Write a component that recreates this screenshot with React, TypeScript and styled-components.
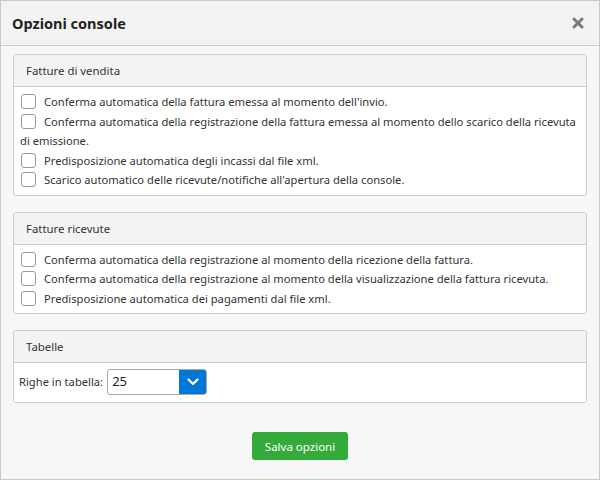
import React from 'react';
import styled, { createGlobalStyle } from 'styled-components';

const GlobalStyle = createGlobalStyle`
  html, body {
    margin: 0;
    padding: 0;
    background: #ffffff;
  }
  body {
    font-family: "Segoe UI", "Noto Sans", "Open Sans", sans-serif;
    color: #333;
  }
`;

const Dialog = styled.div`
  width: 600px;
  height: 480px;
  box-sizing: border-box;
  border: 1px solid #c9c9c9;
  background: #f5f7f8;
  display: flex;
  flex-direction: column;
`;

const Header = styled.div`
  height: 44px;
  flex: none;
  background: #f3f3f3;
  border-bottom: 1px solid #cfcfcf;
  display: flex;
  align-items: center;
  justify-content: space-between;
  padding: 0 15px 0 11px;
`;

const Title = styled.h1`
  margin: 0;
  font-size: 14.5px;
  font-weight: 700;
  color: #222;
`;

const CloseButton = styled.button`
  border: none;
  background: none;
  padding: 0;
  width: 12px;
  height: 12px;
  display: flex;
  cursor: pointer;
`;

const Body = styled.div`
  padding: 8px 12px 0 12px;
  display: flex;
  flex-direction: column;
  gap: 16px;
`;

const Panel = styled.section`
  border: 1px solid #cccccc;
  border-radius: 3px;
  background: #ffffff;
  overflow: hidden;
`;

const PanelHeading = styled.div`
  height: 32px;
  box-sizing: border-box;
  background: #f3f3f3;
  border-bottom: 1px solid #cccccc;
  padding: 0 12px;
  display: flex;
  align-items: center;
  font-size: 11.4px;
  color: #333;
`;

const PanelBody = styled.div<{ $inline?: boolean }>`
  padding: ${p => (p.$inline ? '6px 5px 7px' : '5px 1px 5px 6px')};
  font-size: 11.2px;
  line-height: 19.5px;
  color: #333;
  ${p => p.$inline && 'display: flex; align-items: center; gap: 4px;'}
`;

const OptionLine = styled.label`
  display: block;
`;

const Check = styled.input.attrs({ type: 'checkbox' })`
  appearance: none;
  width: 15px;
  height: 15px;
  margin: 0 8px 0 1px;
  border: 1px solid #9a9a9a;
  border-radius: 3px;
  background: #fff;
  vertical-align: -3px;
  box-sizing: border-box;
`;

const SelectBox = styled.div`
  width: 100px;
  height: 26px;
  box-sizing: border-box;
  border: 1px solid #a8a8a8;
  border-radius: 3px;
  display: flex;
  overflow: hidden;
`;

const SelectValue = styled.div`
  flex: 1;
  padding-left: 4px;
  display: flex;
  align-items: center;
  font-size: 13px;
  color: #222;
`;

const SelectArrow = styled.div`
  width: 27px;
  background: #0078d7;
  display: flex;
  align-items: center;
  justify-content: center;
`;

const Footer = styled.div`
  display: flex;
  justify-content: center;
  padding-top: 13px;
`;

const SaveButton = styled.button`
  width: 96px;
  height: 28px;
  border: none;
  border-radius: 3px;
  background: #34aa3b;
  color: #fff;
  font-family: inherit;
  font-size: 11.5px;
  cursor: pointer;
`;

const venditaOptions = [
  "Conferma automatica della fattura emessa al momento dell'invio.",
  'Conferma automatica della registrazione della fattura emessa al momento dello scarico della ricevuta di emissione.',
  'Predisposizione automatica degli incassi dal file xml.',
  "Scarico automatico delle ricevute/notifiche all'apertura della console.",
];

const ricevuteOptions = [
  'Conferma automatica della registrazione al momento della ricezione della fattura.',
  'Conferma automatica della registrazione al momento della visualizzazione della fattura ricevuta.',
  'Predisposizione automatica dei pagamenti dal file xml.',
];

function OptionPanel({ title, options }: { title: string; options: string[] }) {
  return (
    <Panel>
      <PanelHeading>{title}</PanelHeading>
      <PanelBody>
        {options.map(text => (
          <OptionLine key={text}>
            <Check />
            {text}
          </OptionLine>
        ))}
      </PanelBody>
    </Panel>
  );
}

export default function App() {
  return (
    <>
      <GlobalStyle />
      <Dialog>
        <Header>
          <Title>Opzioni console</Title>
          <CloseButton aria-label="Chiudi">
            <svg width="12" height="12" viewBox="0 0 12 12">
              <path d="M2 2 L10 10 M10 2 L2 10" stroke="#7a7a7a" strokeWidth="3" strokeLinecap="round" />
            </svg>
          </CloseButton>
        </Header>
        <Body>
          <OptionPanel title="Fatture di vendita" options={venditaOptions} />
          <OptionPanel title="Fatture ricevute" options={ricevuteOptions} />
          <Panel>
            <PanelHeading>Tabelle</PanelHeading>
            <PanelBody $inline>
              <span>Righe in tabella:</span>
              <SelectBox>
                <SelectValue>25</SelectValue>
                <SelectArrow>
                  <svg width="12" height="8" viewBox="0 0 12 8">
                    <path d="M1.5 1.5 L6 6 L10.5 1.5" stroke="#fff" strokeWidth="2.2" fill="none" strokeLinecap="round" strokeLinejoin="round" />
                  </svg>
                </SelectArrow>
              </SelectBox>
            </PanelBody>
          </Panel>
          <Footer>
            <SaveButton>Salva opzioni</SaveButton>
          </Footer>
        </Body>
      </Dialog>
    </>
  );
}
